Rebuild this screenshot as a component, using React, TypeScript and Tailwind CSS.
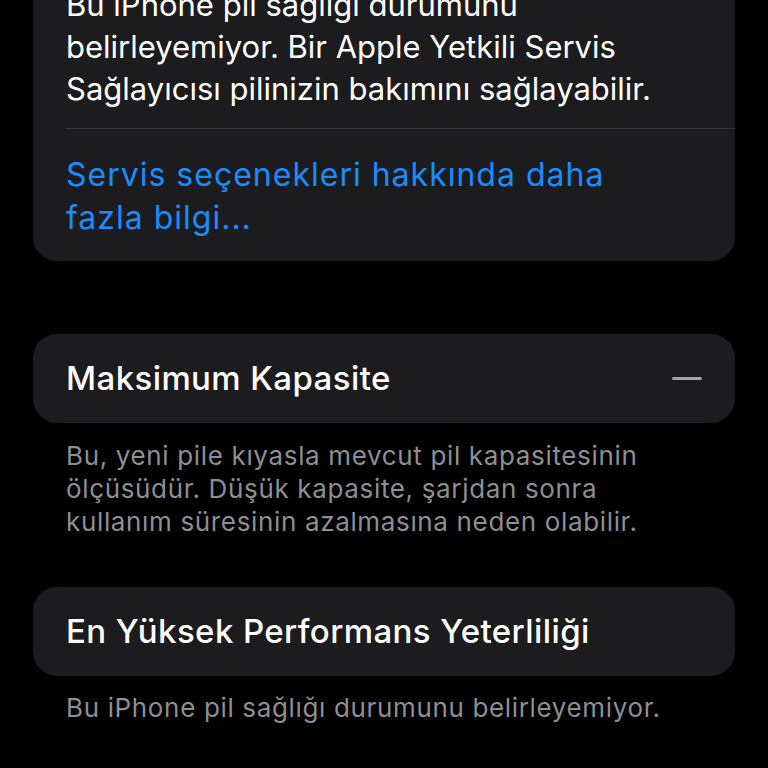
export default function App() {
  const font = { fontFamily: 'Inter, "Noto Sans", sans-serif' }
  return (
    <div className="min-h-[768px] w-[768px] overflow-hidden bg-black px-[33px]" style={font}>
      {/* Top card, scrolled partly out of view */}
      <div className="-mt-[40px] rounded-[24px] bg-[#1c1c1e] pl-[33px] pt-[24px]">
        <p className="whitespace-nowrap pb-[18px] text-[31px] leading-[42px] text-white">
          Bu iPhone pil sağlığı durumunu
          <br />
          belirleyemiyor. Bir Apple Yetkili Servis
          <br />
          Sağlayıcısı pilinizin bakımını sağlayabilir.
        </p>
        <div className="border-t border-[#38383a]" />
        <p className="whitespace-nowrap pt-[24px] pb-[22px] text-[32px] leading-[43px] tracking-[1px] text-[#1a8cff]">
          Servis seçenekleri hakkında daha
          <br />
          fazla bilgi...
        </p>
      </div>

      {/* Maksimum Kapasite */}
      <div className="mt-[73px] flex h-[89px] items-center justify-between rounded-[24px] bg-[#1c1c1e] px-[33px]">
        <span className="text-[33px] font-medium tracking-[0.4px] text-white">Maksimum Kapasite</span>
        <span className="block h-[3px] w-[30px] rounded-full bg-[#a3a3a8]" />
      </div>
      <p className="whitespace-nowrap px-[33px] pt-[16px] text-[26px] leading-[33px] tracking-[0.65px] text-[#8e8e93]">
        Bu, yeni pile kıyasla mevcut pil kapasitesinin
        <br />
        ölçüsüdür. Düşük kapasite, şarjdan sonra
        <br />
        kullanım süresinin azalmasına neden olabilir.
      </p>

      {/* En Yüksek Performans Yeterliliği */}
      <div className="mt-[49px] flex h-[89px] items-center rounded-[24px] bg-[#1c1c1e] px-[33px]">
        <span className="text-[33px] font-medium tracking-[0.4px] text-white">En Yüksek Performans Yeterliliği</span>
      </div>
      <p className="whitespace-nowrap px-[33px] pt-[15px] text-[26px] leading-[33px] tracking-[0.65px] text-[#8e8e93]">
        Bu iPhone pil sağlığı durumunu belirleyemiyor.
      </p>
    </div>
  )
}
